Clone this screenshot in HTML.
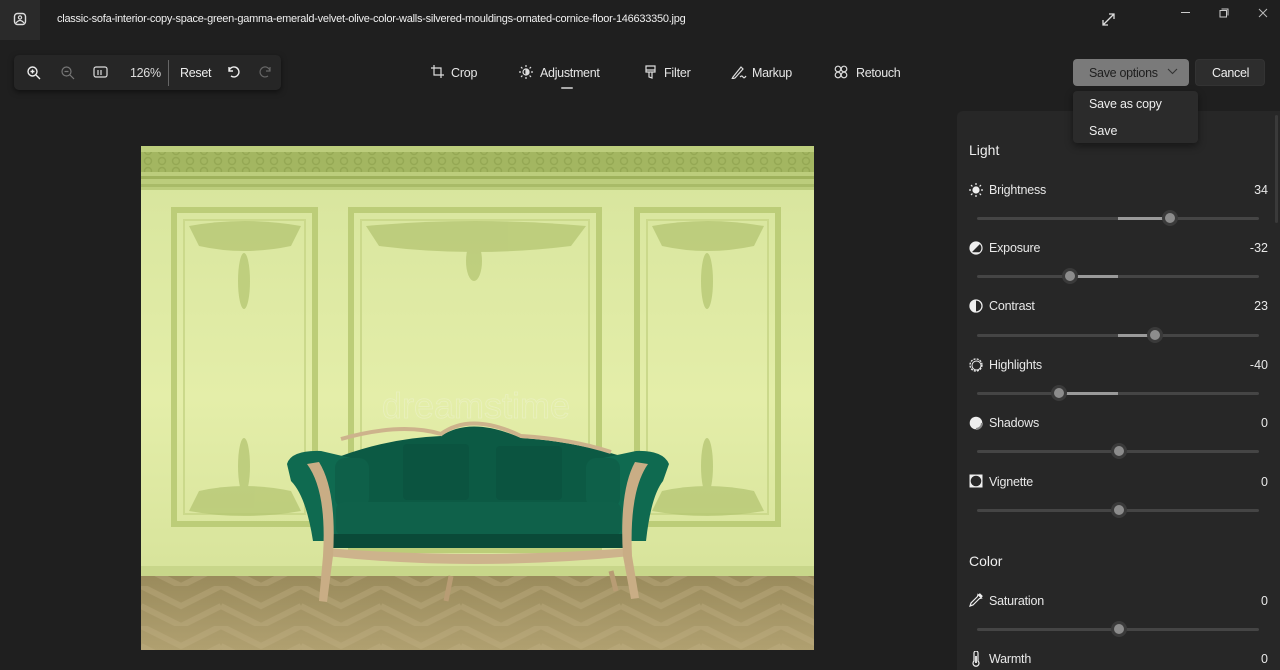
<!DOCTYPE html>
<html><head><meta charset="utf-8">
<style>
*{margin:0;padding:0;box-sizing:border-box}
body{width:1280px;height:670px;background:#1f1f1f;font-family:"Liberation Sans",sans-serif;color:#e6e6e6;position:relative;overflow:hidden;font-size:12.5px}
.abs{position:absolute}
.t{position:absolute;white-space:nowrap}
.track{position:absolute;left:977px;width:282px;height:3px;background:#454545;border-radius:2px}
.fill{position:absolute;height:3px;background:#9a9a9a}
.thumb{position:absolute;width:16px;height:16px;border-radius:50%;background:#3a3a3a;}
.thumb::after{content:"";position:absolute;left:3px;top:3px;width:10px;height:10px;border-radius:50%;background:#8c8c8c}
.lbl{position:absolute;left:989px;font-size:12.5px;color:#e8e8e8;letter-spacing:-0.2px}
.val{position:absolute;right:12px;font-size:12.5px;color:#e8e8e8;text-align:right}
.ic{position:absolute;left:969px}
</style></head><body>
<div class="abs" style="left:0;top:0;width:40px;height:40px;background:#2a2a2a"></div>
<svg class="abs" style="left:13px;top:12px" width="14" height="14" viewBox="0 0 14 14"><rect x="1.5" y="1.5" width="11" height="11" rx="3" fill="none" stroke="#ddd" stroke-width="1.4"/><circle cx="7" cy="5.5" r="1.6" fill="none" stroke="#ddd" stroke-width="1.2"/><path d="M3 11 Q7 6 11 11" fill="none" stroke="#ddd" stroke-width="1.2"/></svg>
<div class="t" style="left:57px;top:13px;font-size:11px;color:#f0f0f0;letter-spacing:-0.25px">classic-sofa-interior-copy-space-green-gamma-emerald-velvet-olive-color-walls-silvered-mouldings-ornated-cornice-floor-146633350.jpg</div>
<svg class="abs" style="left:1101px;top:12px" width="15" height="15" viewBox="0 0 15 15" fill="none" stroke="#ddd" stroke-width="1.3"><path d="M2 13L13 2M8 2h5v5M2 8v5h5"/></svg>
<div class="abs" style="left:1181px;top:12px;width:9px;height:1px;background:#ccc"></div>
<svg class="abs" style="left:1219px;top:8px" width="10" height="10" viewBox="0 0 10 10" fill="none" stroke="#ccc"><rect x="1" y="2.5" width="6.5" height="6.5"/><path d="M2.5 1h6.5v6.5"/></svg>
<svg class="abs" style="left:1258px;top:8px" width="10" height="10" viewBox="0 0 10 10" stroke="#bbb"><path d="M1 1l8 8M9 1l-8 8"/></svg>

<div class="abs" style="left:14px;top:55px;width:267px;height:35px;background:#262626;border-radius:5px;box-shadow:0 2px 6px rgba(0,0,0,.5)"></div>
<svg class="abs" style="left:26px;top:65px" width="16" height="16" viewBox="0 0 16 16" fill="none" stroke="#eee" stroke-width="1.4"><circle cx="6.5" cy="6.5" r="4.5"/><path d="M10 10l4 4M4.5 6.5h4M6.5 4.5v4"/></svg>
<svg class="abs" style="left:60px;top:65px" width="16" height="16" viewBox="0 0 16 16" fill="none" stroke="#777" stroke-width="1.2"><circle cx="6.5" cy="6.5" r="4.5"/><path d="M10 10l4 4M4.5 6.5h4"/></svg>
<svg class="abs" style="left:93px;top:66px" width="15" height="13" viewBox="0 0 15 13" fill="none" stroke="#ddd" stroke-width="1.2"><rect x="1" y="1" width="13" height="10" rx="2"/><path d="M5 4v5M8 4v5"/></svg>
<div class="t" style="left:130px;top:66px;color:#ddd;letter-spacing:-0.3px">126%</div>
<div class="abs" style="left:168px;top:60px;width:1px;height:26px;background:#666"></div>
<div class="t" style="left:180px;top:66px;color:#eee;letter-spacing:-0.3px">Reset</div>
<svg class="abs" style="left:226px;top:65px" width="14" height="14" viewBox="0 0 14 14" fill="none" stroke="#eee" stroke-width="1.4"><path d="M3 2v4h4M3 6a5 5 0 1 1 2 5"/></svg>
<svg class="abs" style="left:259px;top:65px" width="14" height="14" viewBox="0 0 14 14" fill="none" stroke="#666" stroke-width="1.2"><path d="M11 2v4H7M11 6a5 5 0 1 0-2 5"/></svg>

<svg class="abs" style="left:431px;top:65px" width="13" height="13" viewBox="0 0 13 13" fill="none" stroke="#ddd" stroke-width="1.2"><path d="M3 0v10h10M0 3h10v10"/></svg>
<div class="t" style="left:451px;top:66px;letter-spacing:-0.2px">Crop</div>
<svg class="abs" style="left:519px;top:65px" width="14" height="14" viewBox="0 0 14 14" stroke="#ddd" stroke-width="1.2" fill="none"><circle cx="7" cy="7" r="3"/><path d="M7 4a3 3 0 0 1 0 6z" fill="#ddd"/><path d="M7 0v2M7 12v2M0 7h2M12 7h2M2 2l1.4 1.4M10.6 10.6L12 12M2 12l1.4-1.4M10.6 3.4L12 2"/></svg>
<div class="t" style="left:540px;top:66px;letter-spacing:-0.3px">Adjustment</div>
<div class="abs" style="left:561px;top:87px;width:12px;height:2px;background:#aaa;border-radius:1px"></div>
<svg class="abs" style="left:645px;top:65px" width="11" height="14" viewBox="0 0 11 14" fill="none" stroke="#ddd" stroke-width="1.2"><path d="M1 1h9v6H1zM1 5h9M4 7v5l3 1V7"/></svg>
<div class="t" style="left:664px;top:66px;letter-spacing:-0.2px">Filter</div>
<svg class="abs" style="left:731px;top:65px" width="16" height="14" viewBox="0 0 16 14" fill="none" stroke="#ddd" stroke-width="1.2"><path d="M2 12L10 2l2 2-8 9-3 1zM9 12q2-2 3 0t3-1"/></svg>
<div class="t" style="left:752px;top:66px;letter-spacing:-0.3px">Markup</div>
<svg class="abs" style="left:834px;top:65px" width="14" height="14" viewBox="0 0 14 14" fill="none" stroke="#ddd" stroke-width="1.2"><circle cx="4" cy="4" r="2.8"/><circle cx="10" cy="4" r="2.8"/><circle cx="4" cy="10" r="2.8"/><circle cx="10" cy="10" r="2.8"/></svg>
<div class="t" style="left:856px;top:66px;letter-spacing:-0.3px">Retouch</div>

<div class="abs" style="left:1073px;top:59px;width:116px;height:27px;background:#7a7a7a;border-radius:4px"></div>
<div class="t" style="left:1089px;top:66px;color:#1e1e1e;letter-spacing:-0.3px">Save options</div>
<svg class="abs" style="left:1167px;top:68px" width="11" height="7" viewBox="0 0 11 7" fill="none" stroke="#333" stroke-width="1.1"><path d="M1 1l4.5 4.5L10 1"/></svg>
<div class="abs" style="left:1195px;top:59px;width:70px;height:27px;background:#2d2d2d;border-radius:4px;border:1px solid #333"></div>
<div class="t" style="left:1212px;top:66px;color:#eee;letter-spacing:-0.3px">Cancel</div>

<svg class="abs" style="left:141px;top:146px" width="673" height="504" viewBox="0 0 673 504">
<defs>
<linearGradient id="wall" x1="0" y1="0" x2="0" y2="1"><stop offset="0" stop-color="#d6e49c"/><stop offset=".5" stop-color="#e4eea9"/><stop offset="1" stop-color="#d2df95"/></linearGradient>
<linearGradient id="fl" x1="0" y1="0" x2="0" y2="1"><stop offset="0" stop-color="#9a8b5c"/><stop offset="1" stop-color="#b0a070"/></linearGradient>
<pattern id="ch" width="80" height="40" patternUnits="userSpaceOnUse"><path d="M0 0l40 20 40-20M0 20l40 20 40-20" stroke="#c2b286" stroke-width="6" fill="none" opacity=".35"/></pattern>
<pattern id="orn" width="14" height="10" patternUnits="userSpaceOnUse"><circle cx="7" cy="5" r="3.5" fill="none" stroke="#8fa24f" stroke-width="1.5"/></pattern>
</defs>
<rect width="673" height="504" fill="url(#wall)"/>
<rect width="673" height="44" fill="#bccd7c"/>
<rect y="6" width="673" height="20" fill="#a3b661"/>
<rect y="6" width="673" height="20" fill="url(#orn)" opacity=".7"/>
<rect y="30" width="673" height="3" fill="#9fb25c"/>
<rect y="38" width="673" height="3" fill="#a9bb68"/>
<g fill="none" stroke="#bccd78" stroke-width="6">
<rect x="33" y="64" width="141" height="314"/>
<rect x="210" y="64" width="248" height="340"/>
<rect x="496" y="64" width="141" height="314"/>
</g>
<g fill="none" stroke="#cbd98b" stroke-width="2">
<rect x="43" y="74" width="121" height="294"/><rect x="220" y="74" width="228" height="320"/><rect x="506" y="74" width="121" height="294"/>
</g>
<g fill="#b4c572" opacity=".75">
<path d="M48 80 Q103 70 160 80 L150 100 Q103 110 58 100Z"/><path d="M225 80 Q333 70 445 80 L430 100 Q333 112 238 100Z"/><path d="M511 80 Q566 70 623 80 L613 100 Q566 110 521 100Z"/>
<ellipse cx="103" cy="135" rx="6" ry="28"/><ellipse cx="333" cy="115" rx="8" ry="20"/><ellipse cx="566" cy="135" rx="6" ry="28"/>
<path d="M48 365 Q103 375 160 365 L150 345 Q103 335 58 345Z"/><path d="M511 365 Q566 375 623 365 L613 345 Q566 335 521 345Z"/>
<ellipse cx="103" cy="320" rx="6" ry="28"/><ellipse cx="566" cy="320" rx="6" ry="28"/>
</g>
<rect y="430" width="673" height="74" fill="url(#fl)"/>
<rect y="430" width="673" height="74" fill="url(#ch)"/>
<rect y="420" width="673" height="10" fill="#c8d68a"/>
<!-- sofa -->
<path d="M200 310 Q250 292 300 290 Q330 270 380 292 Q430 295 480 310 L480 400 L190 400Z" fill="#0c5a44"/>
<path d="M146 318 Q150 304 180 305 L210 312 L210 395 L172 395 Q165 350 150 335Z" fill="#0f6a50"/>
<path d="M528 318 Q522 304 495 305 L462 312 L462 395 L505 395 Q510 350 522 335Z" fill="#0f6a50"/>
<rect x="262" y="298" width="66" height="56" rx="4" fill="#0b5440"/>
<rect x="355" y="300" width="66" height="54" rx="4" fill="#0b5440"/>
<rect x="194" y="312" width="34" height="50" rx="10" fill="#0e6049"/>
<rect x="445" y="312" width="34" height="50" rx="10" fill="#0e6049"/>
<rect x="195" y="356" width="285" height="34" rx="8" fill="#0f614a"/>
<rect x="188" y="388" width="298" height="14" fill="#0a4a38"/>
<path d="M185 402 Q330 414 490 402 L490 410 Q330 426 185 410Z" fill="#cdb38c"/>
<path d="M166 318 Q186 345 182 410 L178 455 L186 456 L192 410 Q196 345 178 316Z" fill="#c9ad85"/>
<path d="M507 318 Q488 345 491 410 L498 452 L490 453 L482 410 Q478 345 494 316Z" fill="#c9ad85"/>
<path d="M200 293 Q260 276 300 288 Q330 266 380 290 Q430 293 470 306" fill="none" stroke="#cdb38c" stroke-width="4"/>
<path d="M305 455 L310 430 M475 445 L470 425" stroke="#b89c74" stroke-width="5"/>
<text x="335" y="272" text-anchor="middle" font-family="Liberation Sans" font-size="36" fill="none" stroke="#eef3d0" stroke-width="0.8" opacity=".55">dreamstime</text>
</svg>

<div class="abs" style="left:957px;top:111px;width:323px;height:559px;background:#272727;border-radius:6px 0 0 0"></div>
<div class="abs" style="left:1275px;top:115px;width:3px;height:108px;background:#3a3a3a;border-radius:2px"></div>
<div class="t" style="left:969px;top:142px;font-size:14px;color:#eee">Light</div>

<svg class="ic" style="top:183px" width="14" height="14" viewBox="0 0 14 14" stroke="#eee" stroke-width="1.2"><circle cx="7" cy="7" r="3" fill="#eee"/><path d="M7 0v2M7 12v2M0 7h2M12 7h2M2 2l1.4 1.4M10.6 10.6L12 12M2 12l1.4-1.4M10.6 3.4L12 2"/></svg>
<div class="lbl" style="top:183px">Brightness</div><div class="val" style="top:183px">34</div>
<div class="track" style="top:217px"></div><div class="fill" style="left:1118px;width:52px;top:217px"></div><div class="thumb" style="left:1162px;top:210px"></div>

<svg class="ic" style="top:241px" width="14" height="14" viewBox="0 0 14 14"><circle cx="7" cy="7" r="6" fill="#eee"/><path d="M2.8 11.2L11.2 2.8A6 6 0 0 1 11.2 11.2z" fill="#272727"/><circle cx="7" cy="7" r="6" fill="none" stroke="#eee" stroke-width="1.2"/></svg>
<div class="lbl" style="top:241px">Exposure</div><div class="val" style="top:241px">-32</div>
<div class="track" style="top:275px"></div><div class="fill" style="left:1070px;width:48px;top:275px"></div><div class="thumb" style="left:1062px;top:268px"></div>

<svg class="ic" style="top:299px" width="14" height="14" viewBox="0 0 14 14"><circle cx="7" cy="7" r="6" fill="none" stroke="#eee" stroke-width="1.3"/><path d="M7 1a6 6 0 0 0 0 12z" fill="#eee"/></svg>
<div class="lbl" style="top:299px">Contrast</div><div class="val" style="top:299px">23</div>
<div class="track" style="top:334px"></div><div class="fill" style="left:1118px;width:37px;top:334px"></div><div class="thumb" style="left:1147px;top:327px"></div>

<svg class="ic" style="top:358px" width="14" height="14" viewBox="0 0 14 14"><circle cx="7" cy="7" r="6" fill="none" stroke="#eee" stroke-width="1.3" stroke-dasharray="2 1.2"/><circle cx="7.5" cy="7.5" r="4.5" fill="none" stroke="#eee" stroke-width="1"/></svg>
<div class="lbl" style="top:358px">Highlights</div><div class="val" style="top:358px">-40</div>
<div class="track" style="top:392px"></div><div class="fill" style="left:1059px;width:59px;top:392px"></div><div class="thumb" style="left:1051px;top:385px"></div>

<svg class="ic" style="top:416px" width="14" height="14" viewBox="0 0 14 14"><circle cx="7" cy="7" r="6.3" fill="#eee"/><path d="M13 7a6 6 0 0 1-6 6" stroke="#888" stroke-width="2" fill="none"/></svg>
<div class="lbl" style="top:416px">Shadows</div><div class="val" style="top:416px">0</div>
<div class="track" style="top:450px"></div><div class="thumb" style="left:1111px;top:443px"></div>

<svg class="ic" style="top:474px" width="14" height="14" viewBox="0 0 14 14"><rect x="0.5" y="0.5" width="13" height="13" fill="#eee"/><circle cx="7" cy="7" r="5.3" fill="#272727"/></svg>
<div class="lbl" style="top:475px">Vignette</div><div class="val" style="top:475px">0</div>
<div class="track" style="top:509px"></div><div class="thumb" style="left:1111px;top:502px"></div>

<div class="t" style="left:969px;top:553px;font-size:14px;color:#eee">Color</div>

<svg class="ic" style="top:593px" width="14" height="14" viewBox="0 0 14 14" fill="none" stroke="#eee" stroke-width="1.2"><path d="M9 1.5l3.5 3.5-2 0.5L4 12l-3 1 1-3 6.5-6.5z"/><path d="M10 1l3 3" stroke-width="2.5"/></svg>
<div class="lbl" style="top:594px">Saturation</div><div class="val" style="top:594px">0</div>
<div class="track" style="top:628px"></div><div class="thumb" style="left:1111px;top:621px"></div>

<svg class="ic" style="top:651px" width="14" height="16" viewBox="0 0 14 16" fill="none" stroke="#eee" stroke-width="1.2"><path d="M5 2a2 2 0 0 1 4 0v8a3 3 0 1 1-4 0z"/><path d="M7 5v7" stroke-width="1.8"/></svg>
<div class="lbl" style="top:652px">Warmth</div><div class="val" style="top:652px">0</div>

<div class="abs" style="left:1073px;top:91px;width:125px;height:52px;background:#2b2b2b;border-radius:4px;box-shadow:0 3px 8px rgba(0,0,0,.45)"></div>
<div class="t" style="left:1089px;top:97px;color:#eee;letter-spacing:-0.2px">Save as copy</div>
<div class="t" style="left:1089px;top:124px;color:#eee">Save</div>
</body></html>
